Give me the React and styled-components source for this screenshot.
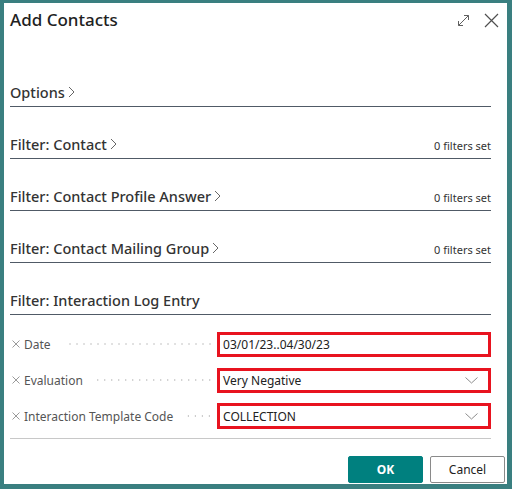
import React from 'react';
import styled, { createGlobalStyle } from 'styled-components';

const GlobalStyle = createGlobalStyle`
  html, body {
    margin: 0;
    padding: 0;
    background: #3a7f80;
  }
  body {
    font-family: 'Noto Sans', 'Open Sans', sans-serif;
    color: #212121;
  }
`;

const Dialog = styled.div`
  box-sizing: border-box;
  width: 512px;
  height: 489px;
  border-style: solid;
  border-color: #3a7f80;
  border-width: 3px 5px 5px 4px;
  background: #ffffff;
  display: flex;
  flex-direction: column;
`;

const Header = styled.div`
  height: 52px;
  box-sizing: border-box;
  padding: 6px 8px 0 6px;
  display: flex;
  align-items: flex-start;
  justify-content: space-between;
`;

const Title = styled.div`
  font-size: 17px;
  font-weight: 500;
  line-height: 22px;
  color: #212121;
`;

const HeaderIcons = styled.div`
  display: flex;
  align-items: center;
  gap: 14px;
  padding-top: 4px;
  color: #505050;
`;

const Body = styled.div`
  padding: 0 16px 0 6px;
  flex: 1;
  display: flex;
  flex-direction: column;
`;

const Section = styled.div`
  height: 52px;
  box-sizing: border-box;
  border-bottom: 1px solid #505a66;
  display: flex;
  align-items: flex-end;
  justify-content: space-between;
  padding-bottom: 4px;
`;

const SectionTitle = styled.div`
  font-size: 14.5px;
  font-weight: 500;
  color: #333333;
  display: flex;
  align-items: center;
  gap: 3px;
  line-height: 20px;
`;

const Count = styled.div`
  font-size: 11px;
  color: #333;
  line-height: 16px;
`;

const Rows = styled.div`
  padding-top: 16px;
  display: flex;
  flex-direction: column;
  gap: 10px;
  padding-bottom: 9px;
  border-bottom: 1px solid #c8c8c8;
`;

const Row = styled.div`
  display: flex;
  align-items: center;
  height: 26px;
`;

const Label = styled.div`
  width: 206px;
  display: flex;
  align-items: center;
  padding-left: 2px;
  font-size: 12px;
  color: #555555;
  gap: 4px;
  white-space: nowrap;
  overflow: hidden;
`;

const Leader = styled.span`
  flex: 1;
  margin: 0 4px 0 10px;
  height: 2px;
  background-image: radial-gradient(circle, #c4c4c4 0.8px, transparent 1px);
  background-size: 7px 2px;
  background-position: right center;
  background-repeat: repeat-x;
`;

const Field = styled.div`
  box-sizing: border-box;
  width: 275px;
  height: ${(p) => (p.tall ? 26 : 25)}px;
  border: 3px solid #e8131f;
  display: flex;
  align-items: center;
  justify-content: space-between;
  padding: 0 10px 0 3px;
  font-size: 12px;
  color: #212121;
`;

const Footer = styled.div`
  display: flex;
  justify-content: flex-end;
  gap: 7px;
  padding: 17px 0 0 0;
  margin-right: -14px;
`;

const Button = styled.button`
  width: 75px;
  height: 27px;
  box-sizing: border-box;
  font-family: inherit;
  font-size: 12px;
  font-weight: ${(p) => (p.primary ? 700 : 400)};
  color: ${(p) => (p.primary ? '#ffffff' : '#212121')};
  background: ${(p) => (p.primary ? '#00807f' : '#ffffff')};
  border: 1px solid ${(p) => (p.primary ? '#00807f' : '#8a8a8a')};
  border-radius: 2px;
`;

const Chevron = () => (
  <svg width="7" height="12" viewBox="0 0 7 12">
    <path d="M1 1 L6 6 L1 11" fill="none" stroke="#666" strokeWidth="1" />
  </svg>
);

const Down = () => (
  <svg width="13" height="7" viewBox="0 0 13 7">
    <path d="M0.5 0.5 L6.5 6 L12.5 0.5" fill="none" stroke="#8c8c8c" strokeWidth="1" />
  </svg>
);

const Clear = () => (
  <svg width="8" height="8" viewBox="0 0 8 8">
    <path d="M0.5 0.5 L7.5 7.5 M7.5 0.5 L0.5 7.5" stroke="#9a9a9a" strokeWidth="1" />
  </svg>
);

const sections = [
  { title: 'Options', arrow: true },
  { title: 'Filter: Contact', arrow: true, count: true },
  { title: 'Filter: Contact Profile Answer', arrow: true, count: true },
  { title: 'Filter: Contact Mailing Group', arrow: true, count: true },
  { title: 'Filter: Interaction Log Entry' },
];

const rows = [
  { label: 'Date', value: '03/01/23..04/30/23' },
  { label: 'Evaluation', value: 'Very Negative', drop: true },
  { label: 'Interaction Template Code', value: 'COLLECTION', drop: true },
];

export default function App() {
  return (
    <>
      <GlobalStyle />
      <Dialog>
        <Header>
          <Title>Add Contacts</Title>
          <HeaderIcons>
            <svg width="13" height="13" viewBox="0 0 13 13">
              <path
                d="M1.5 11.5 L11.5 1.5 M7 1.5 H11.5 V6 M1.5 7 V11.5 H6"
                fill="none"
                stroke="#606060"
                strokeWidth="1"
              />
            </svg>
            <svg width="15" height="15" viewBox="0 0 15 15">
              <path d="M1 1 L14 14 M14 1 L1 14" stroke="#505050" strokeWidth="1.2" />
            </svg>
          </HeaderIcons>
        </Header>
        <Body>
          {sections.map((s) => (
            <Section key={s.title}>
              <SectionTitle>
                {s.title}
                {s.arrow && <Chevron />}
              </SectionTitle>
              {s.count && <Count>0 filters set</Count>}
            </Section>
          ))}
          <Rows>
            {rows.map((r, i) => (
              <Row key={r.label}>
                <Label>
                  <Clear />
                  {r.label}
                  <Leader />
                </Label>
                <Field tall={i === 2}>
                  {r.value}
                  {r.drop && <Down />}
                </Field>
              </Row>
            ))}
          </Rows>
          <Footer>
            <Button primary>OK</Button>
            <Button>Cancel</Button>
          </Footer>
        </Body>
      </Dialog>
    </>
  );
}
